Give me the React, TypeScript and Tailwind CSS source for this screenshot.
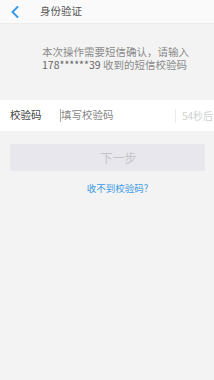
import React from "react";

export default function App() {
  const font = { fontFamily: '"Noto Sans CJK SC", "Noto Sans", sans-serif' };
  return (
    <div className="w-[214px] h-[380px] bg-[#f3f3f3] overflow-hidden" style={font}>
      <div className="h-[24px] bg-[#fafafa] border-b border-[#ececec] flex items-center">
        <div className="w-[40px] flex items-center pl-[11px]">
          <svg width="8" height="12" viewBox="0 0 8 12">
            <polyline points="6.5,1 1.5,6 6.5,11" fill="none" stroke="#3a9be8" strokeWidth="2" strokeLinecap="round" strokeLinejoin="round" />
          </svg>
        </div>
        <span className="text-[10.5px] leading-none text-[#555]">身份验证</span>
      </div>
      <div className="pl-[42px] pt-[22px] h-[76px] text-[10.5px] leading-[12.5px] text-[#8a8a8a] whitespace-nowrap">
        <div>本次操作需要短信确认，请输入</div>
        <div>
          <span className="text-[#666]">178******39</span> 收到的短信校验码
        </div>
      </div>
      <div className="h-[31px] bg-white flex items-center">
        <span className="w-[60px] pl-[10px] text-[10.5px] text-[#444] leading-none">校验码</span>
        <span className="w-[1px] h-[13px] bg-[#aaa]" />
        <span className="flex-1 text-[10.5px] text-[#888] leading-none">填写校验码</span>
        <span className="w-[1px] h-[14px] bg-[#ebebeb]" />
        <span className="w-[38px] pl-[6px] text-[10px] text-[#d0d0d0] leading-none whitespace-nowrap">54秒后</span>
      </div>
      <div className="px-[10px] pt-[13px] pr-[9px]">
        <div className="h-[27px] bg-[#e8e7ee] rounded-[2px] flex items-center justify-center pl-[22px]">
          <span className="text-[12px] text-[#c4c4c8] leading-none">下一步</span>
        </div>
      </div>
      <div className="flex justify-center pt-[13px] pl-[21px]">
        <span className="text-[9.5px] text-[#3d9ae6] leading-none">收不到校验码?</span>
      </div>
    </div>
  );
}
